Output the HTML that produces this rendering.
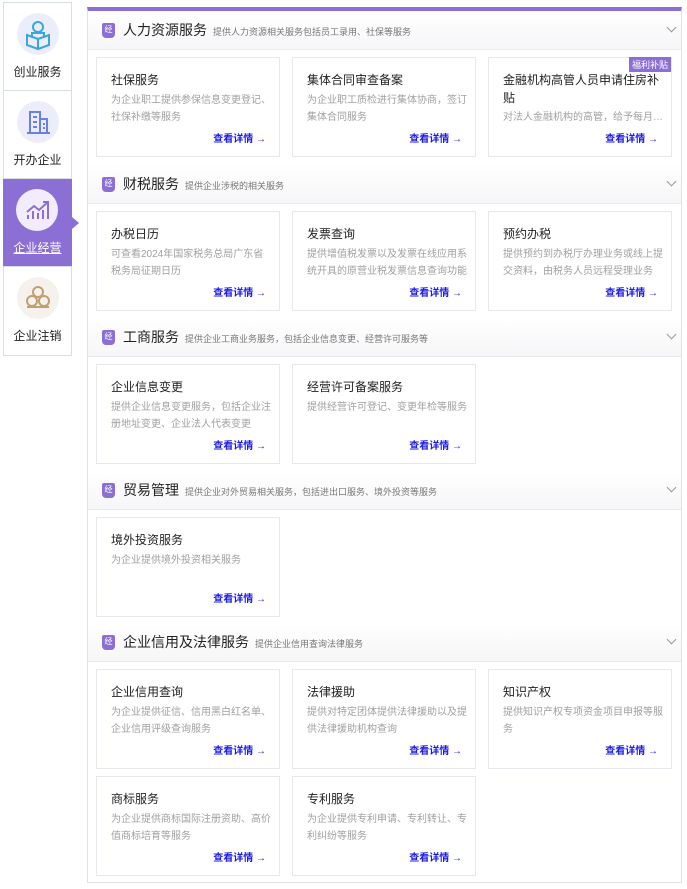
<!DOCTYPE html>
<html><head><meta charset="utf-8"><style>
*{margin:0;padding:0;box-sizing:border-box}
body{width:687px;height:889px;background:#fff;font-family:"Liberation Sans","Noto Sans CJK SC",sans-serif;position:relative;overflow:hidden}
.side{position:absolute;left:3px;top:2px;width:69px;border:1px solid #d6dfe4}
.si{height:88px;position:relative;border-bottom:1px solid #d6dfe4;text-align:center}
.si:last-child{border-bottom:none}
.si .c{position:absolute;left:13px;top:10px;width:42px;height:42px;border-radius:50%;background:#ecedfb}
.si .t{position:absolute;left:0;right:0;top:60px;font-size:12px;color:#222}
.si.act{background:#8b6fd4;margin:0 -1px;}
.si.act .c{background:#f2ecfc}
.si.act .t{color:#fff;text-decoration:underline}
.si.act:after{content:"";position:absolute;right:-7px;top:38px;border-left:7px solid #8b6fd4;border-top:6px solid transparent;border-bottom:6px solid transparent}
.main{position:absolute;left:87px;top:7px;width:595px;height:876px;border:1px solid #dde3e8;border-top:4px solid #8b6fd4}
.sec{position:relative}
.hd{height:39px;border-bottom:1px solid #e8eaee;background:linear-gradient(#fff,#f6f6f8);position:relative}
.hd .ic{position:absolute;left:14px;top:12px;width:13px;height:15px;background:#8b6fd4;border-radius:2px 2px 4px 4px;color:#fff;font-size:8px;text-align:center;line-height:14px}
.hd .h{position:absolute;left:35px;top:9px;font-size:14px;color:#222}
.hd .h small{font-size:9px;color:#777;margin-left:6px}
.hd .ch{position:absolute;right:6px;top:13px;width:7px;height:7px;border-right:1px solid #999;border-bottom:1px solid #999;transform:rotate(45deg)}
.cards{position:relative;padding:7px 0 0 8px;}
.card{position:absolute;width:184px;height:100px;border:1px solid #e6e8ee;background:#fff}
.card .t{position:absolute;left:14px;top:13px;font-size:12px;color:#222;line-height:18px;width:160px}
.card .d{position:absolute;left:14px;top:34px;width:160px;font-size:10px;color:#a0a0a0;line-height:17px}
.card .l{position:absolute;right:13px;top:72px;font-size:10px;color:#1a1ae6;font-weight:bold}
.tag{position:absolute;right:0;top:-1px;background:#8b6fd4;color:#fff;font-size:9px;padding:1px 3px}
</style></head><body>
<div class="side">
 <div class="si"><div class="c"><svg width="42" height="42" viewBox="0 0 42 42" fill="none" stroke="#39a6dc" stroke-width="2"><circle cx="21" cy="14" r="5"/><path d="M15 24v-4h12v4"/><path d="M10 22l11 4 11-4v10l-11 4-11-4z"/><path d="M21 26v10"/></svg></div><div class="t">创业服务</div></div>
 <div class="si"><div class="c"><svg width="42" height="42" viewBox="0 0 42 42" fill="none" stroke="#6a7fe8" stroke-width="2"><path d="M13 32V11h10v21M23 18h7v14M10 32h23M16 16h4M16 21h4M16 26h4M26 23h2M26 27h2"/></svg></div><div class="t">开办企业</div></div>
 <div class="si act"><div class="c"><svg width="42" height="42" viewBox="0 0 42 42" fill="none" stroke="#8b6fd4" stroke-width="2"><path d="M11 23l7-6 5 4 9-8M27 13h5v5"/><path d="M12 30v-4M17 30v-8M22 30v-6M27 30v-9M32 30v-12"/></svg></div><div class="t">企业经营</div></div>
 <div class="si"><div class="c" style="background:#f5f1ec"><svg width="42" height="42" viewBox="0 0 42 42" fill="none" stroke="#c0a070" stroke-width="2"><circle cx="21" cy="15" r="5"/><circle cx="15" cy="24" r="5"/><circle cx="27" cy="24" r="5"/><path d="M10 30h22"/></svg></div><div class="t">企业注销</div></div>
</div>
<div class="main">
 <div class="sec" style="height:154px"><div class="hd"><div class="ic">经</div><div class="h">人力资源服务<small>提供人力资源相关服务包括员工录用、社保等服务</small></div><div class="ch"></div></div>
  <div class="cards">
   <div class="card" style="left:8px;top:7px"><div class="t">社保服务</div><div class="d">为企业职工提供参保信息变更登记、社保补缴等服务</div><div class="l">查看详情 →</div></div>
   <div class="card" style="left:204px;top:7px"><div class="t">集体合同审查备案</div><div class="d">为企业职工质检进行集体协商，签订集体合同服务</div><div class="l">查看详情 →</div></div>
   <div class="card" style="left:400px;top:7px"><div class="tag">福利补贴</div><div class="t">金融机构高管人员申请住房补贴</div><div class="d" style="top:51px;white-space:nowrap;overflow:hidden;text-overflow:ellipsis">对法人金融机构的高管，给予每月1000元</div><div class="l">查看详情 →</div></div>
  </div></div>
 <div class="sec" style="height:153px"><div class="hd"><div class="ic">经</div><div class="h">财税服务<small>提供企业涉税的相关服务</small></div><div class="ch"></div></div>
  <div class="cards">
   <div class="card" style="left:8px;top:7px"><div class="t">办税日历</div><div class="d">可查看2024年国家税务总局广东省税务局征期日历</div><div class="l">查看详情 →</div></div>
   <div class="card" style="left:204px;top:7px"><div class="t">发票查询</div><div class="d">提供增值税发票以及发票在线应用系统开具的原营业税发票信息查询功能</div><div class="l">查看详情 →</div></div>
   <div class="card" style="left:400px;top:7px"><div class="t">预约办税</div><div class="d">提供预约到办税厅办理业务或线上提交资料，由税务人员远程受理业务</div><div class="l">查看详情 →</div></div>
  </div></div>
 <div class="sec" style="height:153px"><div class="hd"><div class="ic">经</div><div class="h">工商服务<small>提供企业工商业务服务，包括企业信息变更、经营许可服务等</small></div><div class="ch"></div></div>
  <div class="cards">
   <div class="card" style="left:8px;top:7px"><div class="t">企业信息变更</div><div class="d">提供企业信息变更服务，包括企业注册地址变更、企业法人代表变更</div><div class="l">查看详情 →</div></div>
   <div class="card" style="left:204px;top:7px"><div class="t">经营许可备案服务</div><div class="d">提供经营许可登记、变更年检等服务</div><div class="l">查看详情 →</div></div>
  </div></div>
 <div class="sec" style="height:152px"><div class="hd"><div class="ic">经</div><div class="h">贸易管理<small>提供企业对外贸易相关服务，包括进出口服务、境外投资等服务</small></div><div class="ch"></div></div>
  <div class="cards">
   <div class="card" style="left:8px;top:7px"><div class="t">境外投资服务</div><div class="d">为企业提供境外投资相关服务</div><div class="l">查看详情 →</div></div>
  </div></div>
 <div class="sec"><div class="hd"><div class="ic">经</div><div class="h">企业信用及法律服务<small>提供企业信用查询法律服务</small></div><div class="ch"></div></div>
  <div class="cards">
   <div class="card" style="left:8px;top:7px"><div class="t">企业信用查询</div><div class="d">为企业提供征信、信用黑白红名单、企业信用评级查询服务</div><div class="l">查看详情 →</div></div>
   <div class="card" style="left:204px;top:7px"><div class="t">法律援助</div><div class="d">提供对特定团体提供法律援助以及提供法律援助机构查询</div><div class="l">查看详情 →</div></div>
   <div class="card" style="left:400px;top:7px"><div class="t">知识产权</div><div class="d">提供知识产权专项资金项目申报等服务</div><div class="l">查看详情 →</div></div>
   <div class="card" style="left:8px;top:114px"><div class="t">商标服务</div><div class="d">为企业提供商标国际注册资助、高价值商标培育等服务</div><div class="l">查看详情 →</div></div>
   <div class="card" style="left:204px;top:114px"><div class="t">专利服务</div><div class="d">为企业提供专利申请、专利转让、专利纠纷等服务</div><div class="l">查看详情 →</div></div>
  </div></div>
</div>
</body></html>
